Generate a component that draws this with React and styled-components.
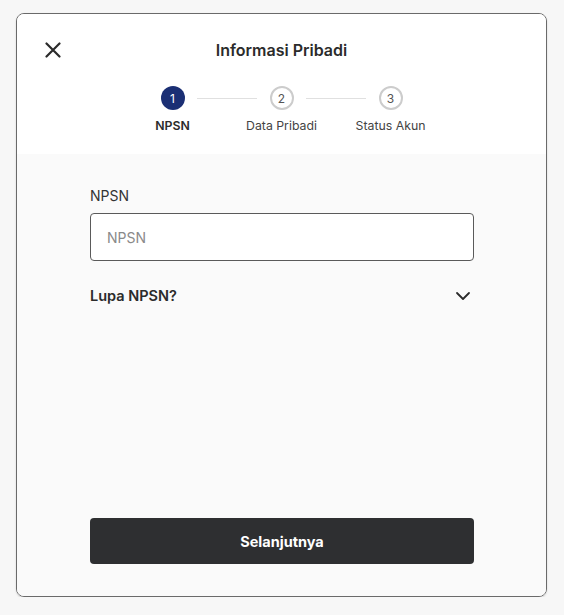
import React from 'react';
import styled, { createGlobalStyle } from 'styled-components';

const Global = createGlobalStyle`
  body {
    margin: 0;
    background: #f7f7f7;
    font-family: Inter, "Noto Sans", sans-serif;
    color: #2b2b2b;
  }
`;

const Page = styled.div`
  padding: 13px 0 0 16px;
`;

const Card = styled.div`
  width: 529px;
  height: 582px;
  border: 1px solid #6a6a6a;
  border-radius: 8px;
  overflow: hidden;
  display: flex;
  flex-direction: column;
  box-shadow: 0 1px 2px rgba(0, 0, 0, 0.15);
`;

const Header = styled.div`
  background: #ffffff;
  padding: 26px 28px 20px;
  display: flex;
  flex-direction: column;
  align-items: center;
`;

const TitleRow = styled.div`
  width: 100%;
  display: grid;
  grid-template-columns: 1fr auto 1fr;
  align-items: center;
`;

const CloseButton = styled.button`
  width: 16px;
  height: 16px;
  padding: 0;
  border: none;
  background: none;
  display: flex;
  cursor: pointer;
`;

const Title = styled.div`
  font-size: 16px;
  line-height: 20px;
  font-weight: 600;
  color: #2b2b2b;
`;

const Stepper = styled.div`
  margin-top: 26px;
  display: flex;
  align-items: flex-start;
`;

const Step = styled.div`
  width: 24px;
  display: flex;
  flex-direction: column;
  align-items: center;
`;

const Circle = styled.div`
  width: 24px;
  height: 24px;
  box-sizing: border-box;
  border-radius: 50%;
  display: flex;
  align-items: center;
  justify-content: center;
  font-size: 12px;
  background: ${({ $active }) => ($active ? '#1b2f74' : '#ffffff')};
  border: ${({ $active }) => ($active ? 'none' : '2px solid #cccccc')};
  color: ${({ $active }) => ($active ? '#ffffff' : '#555555')};
`;

const StepLabel = styled.div`
  margin-top: 8px;
  font-size: 12.3px;
  line-height: 16px;
  white-space: nowrap;
  font-weight: ${({ $active }) => ($active ? 600 : 400)};
  color: ${({ $active }) => ($active ? '#2b2b2b' : '#444444')};
`;

const Connector = styled.div`
  width: 60px;
  height: 1px;
  margin: 11.5px 12.5px 0;
  background: #e0e0e0;
`;

const Body = styled.div`
  flex: 1;
  background: #fafafa;
  padding: 32px 72px 32px 73px;
  display: flex;
  flex-direction: column;
`;

const FieldLabel = styled.label`
  font-size: 14px;
  line-height: 20px;
  color: #333333;
`;

const Input = styled.input`
  margin-top: 7px;
  height: 48px;
  box-sizing: border-box;
  border: 1px solid #5a5a5a;
  border-radius: 4px;
  background: #ffffff;
  padding: 0 16px;
  font-family: inherit;
  font-size: 14px;
  outline: none;
  &::placeholder {
    color: #8a8a8a;
  }
`;

const Accordion = styled.div`
  margin-top: 25px;
  display: flex;
  align-items: center;
  justify-content: space-between;
  padding-right: 3px;
`;

const AccordionTitle = styled.div`
  font-size: 14.5px;
  line-height: 20px;
  font-weight: 600;
  color: #2b2b2b;
`;

const NextButton = styled.button`
  margin-top: auto;
  height: 46px;
  border: none;
  border-radius: 4px;
  background: #2e2f31;
  color: #ffffff;
  font-family: inherit;
  font-size: 14.5px;
  font-weight: 700;
  cursor: pointer;
`;

const steps = ['NPSN', 'Data Pribadi', 'Status Akun'];

export default function App() {
  return (
    <Page>
      <Global />
      <Card>
        <Header>
          <TitleRow>
            <CloseButton aria-label="Tutup">
              <svg width="16" height="16" viewBox="0 0 16 16">
                <path d="M1.5 1.5 L14.5 14.5 M14.5 1.5 L1.5 14.5" stroke="#2b2b2b" strokeWidth="2.2" strokeLinecap="round" />
              </svg>
            </CloseButton>
            <Title>Informasi Pribadi</Title>
            <div />
          </TitleRow>
          <Stepper>
            {steps.map((s, i) => (
              <React.Fragment key={s}>
                {i > 0 && <Connector />}
                <Step>
                  <Circle $active={i === 0}>{i + 1}</Circle>
                  <StepLabel $active={i === 0}>{s}</StepLabel>
                </Step>
              </React.Fragment>
            ))}
          </Stepper>
        </Header>
        <Body>
          <FieldLabel>NPSN</FieldLabel>
          <Input placeholder="NPSN" />
          <Accordion>
            <AccordionTitle>Lupa NPSN?</AccordionTitle>
            <svg width="16" height="16" viewBox="0 0 16 16">
              <path d="M2 5 L8 11 L14 5" fill="none" stroke="#2b2b2b" strokeWidth="1.8" strokeLinecap="round" strokeLinejoin="round" />
            </svg>
          </Accordion>
          <NextButton>Selanjutnya</NextButton>
        </Body>
      </Card>
    </Page>
  );
}
